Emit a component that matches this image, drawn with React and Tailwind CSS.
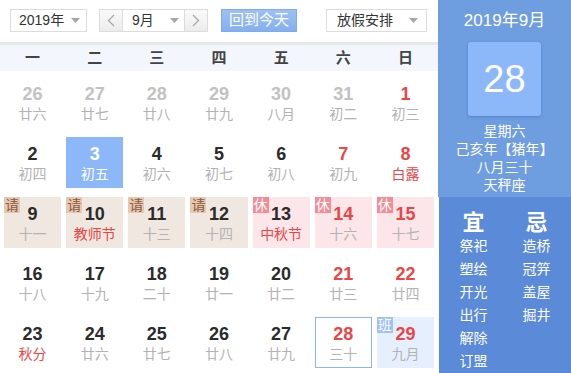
import React from 'react';

const FONT = { fontFamily: '"Liberation Sans", "Noto Sans CJK SC", sans-serif' };

const Caret = () => (
  <svg width="9" height="5" viewBox="0 0 9 5" className="shrink-0">
    <polygon points="0,0 9,0 4.5,5" fill="#a6a6a6" />
  </svg>
);

const Chevron = ({ dir }) => (
  <svg width="8" height="13" viewBox="0 0 8 13">
    <polyline
      points={dir === 'left' ? '7,1 1.5,6.5 7,12' : '1,1 6.5,6.5 1,12'}
      fill="none"
      stroke="#a8a8a8"
      strokeWidth="1.3"
    />
  </svg>
);

const weekdays = ['一', '二', '三', '四', '五', '六', '日'];

// n: number, l: lunar text, tone: 'muted' | 'dark' | 'red', lred: lunar in red
// kind: selected / leave / rest / work / today
const rows = [
  [
    { n: 26, l: '廿六', tone: 'muted' },
    { n: 27, l: '廿七', tone: 'muted' },
    { n: 28, l: '廿八', tone: 'muted' },
    { n: 29, l: '廿九', tone: 'muted' },
    { n: 30, l: '八月', tone: 'muted' },
    { n: 31, l: '初二', tone: 'muted' },
    { n: 1, l: '初三', tone: 'red' },
  ],
  [
    { n: 2, l: '初四' },
    { n: 3, l: '初五', kind: 'selected' },
    { n: 4, l: '初六' },
    { n: 5, l: '初七' },
    { n: 6, l: '初八' },
    { n: 7, l: '初九', tone: 'red' },
    { n: 8, l: '白露', tone: 'red', lred: true },
  ],
  [
    { n: 9, l: '十一', kind: 'leave' },
    { n: 10, l: '教师节', kind: 'leave', lred: true },
    { n: 11, l: '十三', kind: 'leave' },
    { n: 12, l: '十四', kind: 'leave' },
    { n: 13, l: '中秋节', kind: 'rest', lred: true },
    { n: 14, l: '十六', kind: 'rest', tone: 'red' },
    { n: 15, l: '十七', kind: 'rest', tone: 'red' },
  ],
  [
    { n: 16, l: '十八' },
    { n: 17, l: '十九' },
    { n: 18, l: '二十' },
    { n: 19, l: '廿一' },
    { n: 20, l: '廿二' },
    { n: 21, l: '廿三', tone: 'red' },
    { n: 22, l: '廿四', tone: 'red' },
  ],
  [
    { n: 23, l: '秋分', lred: true },
    { n: 24, l: '廿六' },
    { n: 25, l: '廿七' },
    { n: 26, l: '廿八' },
    { n: 27, l: '廿九' },
    { n: 28, l: '三十', kind: 'today', tone: 'red' },
    { n: 29, l: '九月', kind: 'work', tone: 'red' },
  ],
];

const DayCell = ({ d }) => {
  let box = 'bg-white';
  let badge = null;
  if (d.kind === 'selected') box = 'bg-[#8cb8fa]';
  if (d.kind === 'leave') {
    box = 'bg-[#f0e7e1]';
    badge = <span className="absolute left-0 top-0 w-[16px] h-[16px] bg-[#e6c8b2] text-[#8b5a3c] text-[14px] leading-[16px] text-center">请</span>;
  }
  if (d.kind === 'rest') {
    box = 'bg-[#fde6ea]';
    badge = <span className="absolute left-0 top-0 w-[16px] h-[16px] bg-[#f78b95] text-white text-[14px] leading-[16px] text-center">休</span>;
  }
  if (d.kind === 'work') {
    box = 'bg-[#e6effd]';
    badge = <span className="absolute left-0 top-0 w-[16px] h-[16px] bg-[#9fc1f6] text-white text-[14px] leading-[16px] text-center">班</span>;
  }
  if (d.kind === 'today') box = 'bg-white border border-[#8fb5ea]';

  let numColor = 'text-[#2b2b2b]';
  if (d.tone === 'muted') numColor = 'text-[#c2c2c2]';
  if (d.tone === 'red') numColor = 'text-[#ec4545]';
  let lunarColor = d.lred ? 'text-[#ec4545]' : 'text-[#b3b3b3]';
  if (d.kind === 'selected') {
    numColor = 'text-white';
    lunarColor = 'text-white';
  }

  return (
    <div className={`relative h-[51px] flex flex-col items-center ${d.kind === 'today' ? 'pt-[6px]' : 'pt-[7px]'} ${box}`}>
      {badge}
      <span className={`text-[18px] leading-[20px] font-bold ${numColor}`}>{d.n}</span>
      <span className={`mt-[1px] text-[14px] leading-[18px] ${lunarColor}`}>{d.l}</span>
    </div>
  );
};

const yi = ['祭祀', '塑绘', '开光', '出行', '解除', '订盟'];
const ji = ['造桥', '冠笄', '盖屋', '掘井'];

export default function App() {
  return (
    <div className="w-[571px] h-[373px] overflow-hidden flex bg-white" style={FONT}>
      {/* calendar */}
      <div className="w-[438px] shrink-0 flex flex-col">
        <div className="h-[42px] flex items-start pt-[9px] pl-[10px] text-[14px] text-[#333]">
          <div className="w-[77px] h-[23px] border border-[#dcdcdc] flex items-center justify-between pl-[8px] pr-[6px]">
            <span>2019年</span>
            <Caret />
          </div>
          <div className="ml-[12px] h-[23px] flex border border-[#dcdcdc]">
            <div className="w-[23px] flex items-center justify-center bg-gradient-to-b from-[#fafafa] to-[#ececec] border-r border-[#dcdcdc]">
              <Chevron dir="left" />
            </div>
            <div className="w-[61px] flex items-center justify-between pl-[9px] pr-[5px]">
              <span>9月</span>
              <Caret />
            </div>
            <div className="w-[23px] flex items-center justify-center bg-gradient-to-b from-[#fafafa] to-[#ececec] border-l border-[#dcdcdc]">
              <Chevron dir="right" />
            </div>
          </div>
          <div className="ml-[13px] w-[76px] h-[23px] flex items-center justify-center bg-gradient-to-b from-[#9dc0f3] to-[#85b0ee] border border-[#80aaea] text-white text-[15px]">
            回到今天
          </div>
          <div className="ml-[29px] w-[101px] h-[23px] border border-[#dcdcdc] flex items-center justify-between pl-[10px] pr-[8px]">
            <span>放假安排</span>
            <Caret />
          </div>
        </div>
        <div className="h-[3px] bg-[#e8e8e8]" />
        <div className="h-[26px] bg-[#f3f6fd] grid grid-cols-7 gap-x-[5px] px-[4px]">
          {weekdays.map(w => (
            <div key={w} className="flex items-center justify-center text-[15px] font-bold text-[#444]">{w}</div>
          ))}
        </div>
        <div className="grid grid-cols-7 gap-x-[5px] gap-y-[9px] pl-[4px] pr-[4px] pt-[6px]">
          {rows.flat().map((d, i) => (
            <DayCell key={i} d={d} />
          ))}
        </div>
      </div>

      {/* side panel */}
      <div className="flex-1 flex flex-col text-white">
        <div className="h-[207px] bg-[#6e9de0] flex flex-col items-center">
          <div className="mt-[10px] text-[17px] leading-[22px]">2019年9月</div>
          <div className="mt-[10px] w-[73px] h-[74px] rounded-[3px] bg-[#8cb8fa] shadow-[0_1px_3px_rgba(40,80,160,0.35)] flex items-center justify-center text-[38px]">
            28
          </div>
          <div className="mt-[6px] flex flex-col items-center text-[14px] leading-[18px]">
            <span>星期六</span>
            <span>己亥年【猪年】</span>
            <span>八月三十</span>
            <span>天秤座</span>
          </div>
        </div>
        <div className="flex-1 bg-[#5b8ad8] ml-[1px] flex justify-center gap-x-[35px] pt-[12px]">
          <div className="flex flex-col items-center">
            <span className="text-[22px] leading-[28px] font-bold">宜</span>
            <div className="flex flex-col items-center text-[14px] leading-[23px] mt-[-2px]">
              {yi.map(t => <span key={t}>{t}</span>)}
            </div>
          </div>
          <div className="flex flex-col items-center">
            <span className="text-[22px] leading-[28px] font-bold">忌</span>
            <div className="flex flex-col items-center text-[14px] leading-[23px] mt-[-2px]">
              {ji.map(t => <span key={t}>{t}</span>)}
            </div>
          </div>
        </div>
      </div>
    </div>
  );
}
